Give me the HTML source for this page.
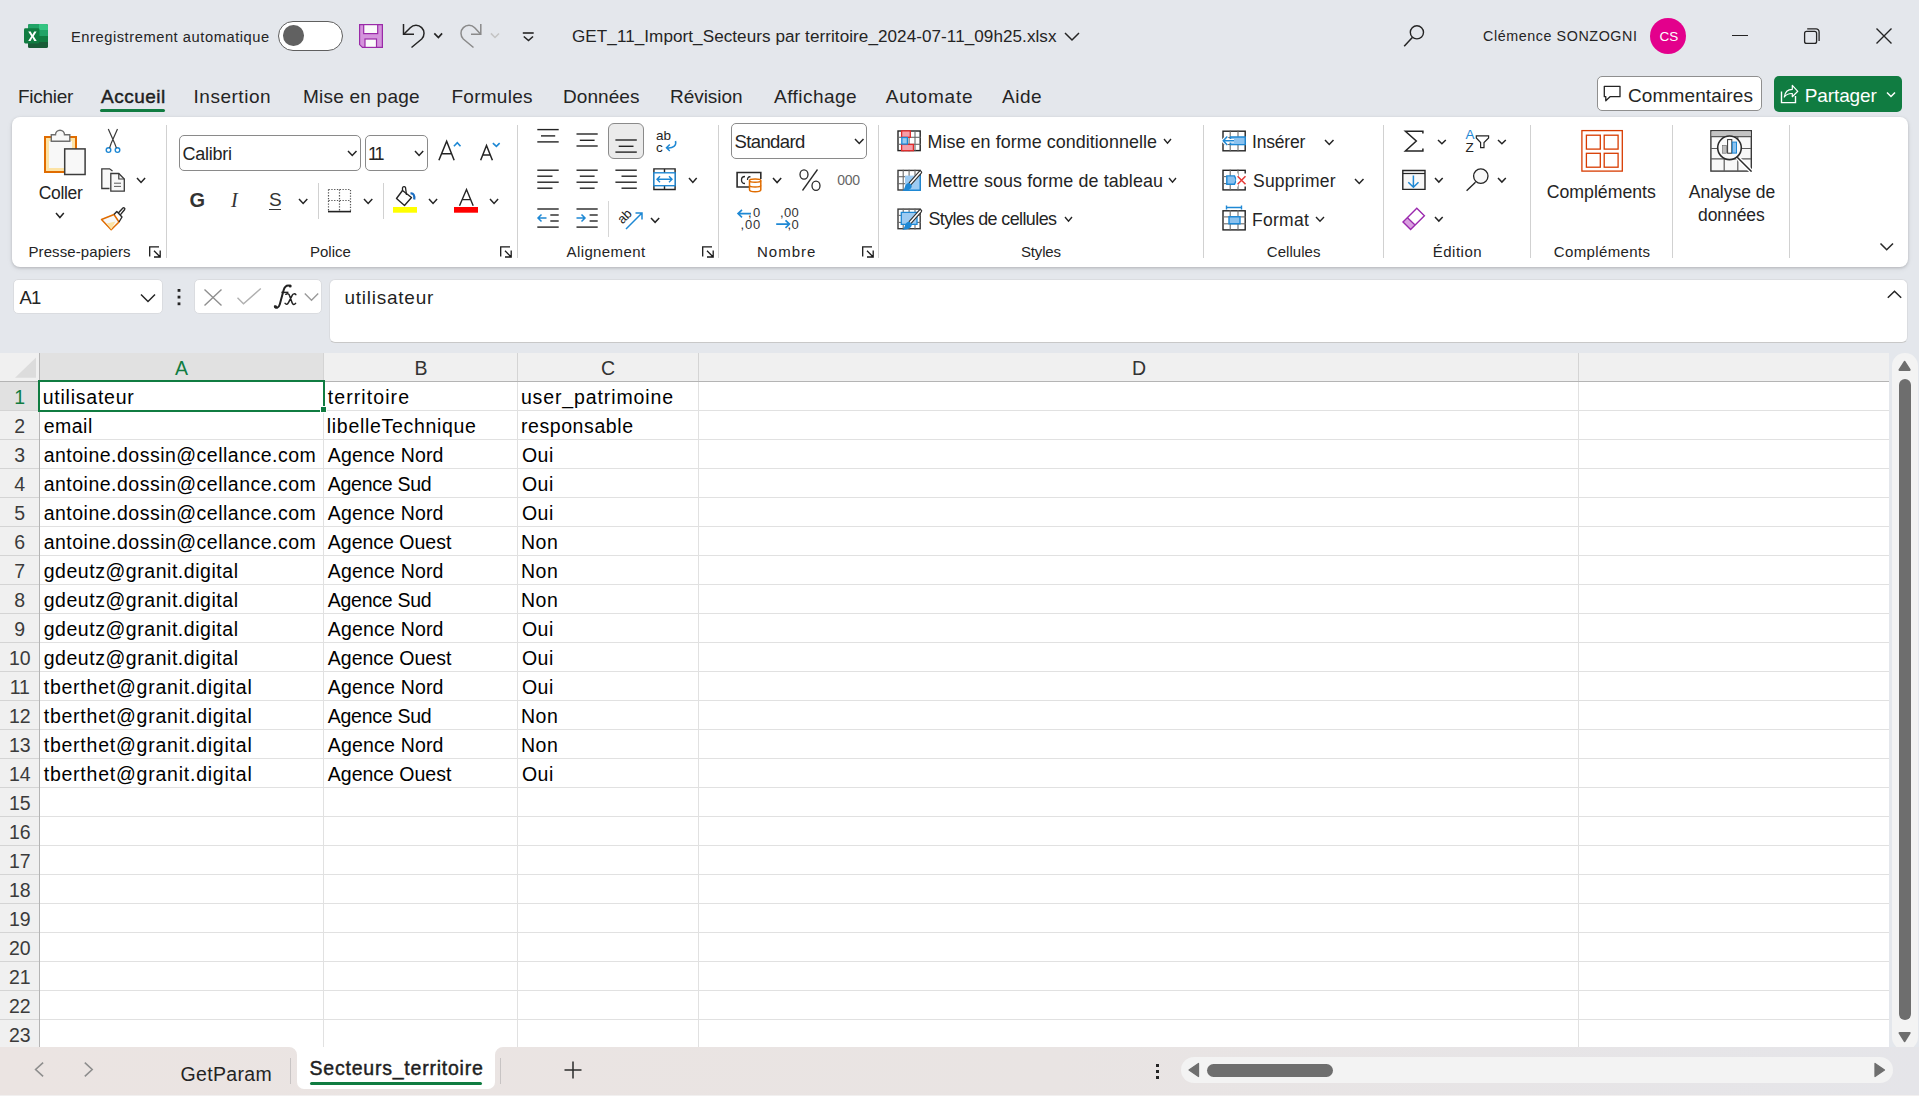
<!DOCTYPE html><html><head><meta charset="utf-8"><style>
html,body{margin:0;padding:0;}
body{width:1919px;height:1096px;overflow:hidden;position:relative;background:#E4E7EC;font-family:"Liberation Sans",sans-serif;}
.t{position:absolute;white-space:nowrap;}
svg{overflow:visible}
</style></head><body>
<svg style="position:absolute;left:23px;top:23px;" width="26" height="26" viewBox="0 0 26 26" fill="none">
<rect x="5" y="1" width="20" height="24" rx="1.6" fill="#185C37"/>
<path d="M5 7V2.6A1.6 1.6 0 0 1 6.6 1H16V7Z" fill="#21A366"/>
<path d="M16 1h7.4A1.6 1.6 0 0 1 25 2.6V7H16Z" fill="#33C481"/>
<rect x="5" y="7" width="20" height="6" fill="#21A366"/>
<rect x="5" y="13" width="20" height="6" fill="#107C41"/>
<rect x="1" y="5.2" width="15.4" height="15.2" rx="1.4" fill="#107C41"/>
<path d="M5.2 8.6h2.5l1.7 3.2 1.8-3.2h2.4l-2.9 4.6 3 4.7h-2.5l-1.8-3.3-1.8 3.3H5.2l3-4.7z" fill="#fff"/>
</svg>
<div class="t" style="left:71.00px;top:30.16px;font-size:14.7px;line-height:14.7px;color:#242424;font-weight:400;letter-spacing:0.546px;">Enregistrement automatique</div>
<div style="position:absolute;left:278px;top:21px;width:65px;height:30px;box-sizing:border-box;border:1px solid #5F5F5F;border-radius:15px;background:#fff;"></div>
<div style="position:absolute;left:283px;top:25px;width:20.6px;height:20.6px;border-radius:50%;background:#616161;"></div>
<svg style="position:absolute;left:359px;top:24px;" width="24" height="24" viewBox="0 0 24 24" fill="none">
<path d="M0.6 0.6H23.4V23.4H3.4L0.6 20.6Z" fill="#D494DC" stroke="#9A2AA8" stroke-width="1.2"/>
<rect x="4.7" y="0.6" width="14" height="9" fill="#fafafa" stroke="#9A2AA8" stroke-width="1.2"/>
<rect x="6" y="15" width="11.5" height="8.4" fill="#fafafa" stroke="#9A2AA8" stroke-width="1.2"/>
</svg>
<svg style="position:absolute;left:396px;top:18px;" width="50" height="36" viewBox="0 0 50 36" fill="none">
<path d="M7.5 6V16.2H18" stroke="#242424" stroke-width="1.5"/>
<path d="M8 16L14.3 9.7A8 8 0 0 1 25.7 21L15.5 29.5" stroke="#242424" stroke-width="1.5"/>
<path d="M38.3 15.4L42.4 19.5L46.1 15.4" stroke="#242424" stroke-width="1.7"/>
</svg>
<svg style="position:absolute;left:456px;top:18px;" width="50" height="36" viewBox="0 0 50 36" fill="none">
<path d="M24.8 6V16.2H15" stroke="#8A8A8A" stroke-width="1.5"/>
<path d="M24.5 16L18.7 9.7A8 8 0 0 0 7.3 21L17.5 29.5" stroke="#8A8A8A" stroke-width="1.5"/>
<path d="M34.9 15.4L39 19.5L43 15.4" stroke="#C4C4C4" stroke-width="1.5"/>
</svg>
<svg style="position:absolute;left:520px;top:28px;" width="16" height="16" viewBox="0 0 16 16" fill="none">
<path d="M2.8 5H13.7" stroke="#242424" stroke-width="1.6"/>
<path d="M3.8 8.5L8.5 12.5L13 8.5" stroke="#242424" stroke-width="1.6"/>
</svg>
<div class="t" style="left:572.00px;top:28.12px;font-size:17.1px;line-height:17.1px;color:#242424;font-weight:400;letter-spacing:0.059px;">GET_11_Import_Secteurs par territoire_2024-07-11_09h25.xlsx</div>
<svg style="position:absolute;left:1062px;top:28px;" width="20" height="16" viewBox="0 0 20 16" fill="none"><path d="M3 5L10 12L17 5" stroke="#242424" stroke-width="1.5"/></svg>
<svg style="position:absolute;left:1400px;top:20px;" width="30" height="30" viewBox="0 0 30 30" fill="none">
<circle cx="16.9" cy="12.3" r="6.6" stroke="#242424" stroke-width="1.4"/>
<path d="M12.3 17.4L4.2 26.2" stroke="#242424" stroke-width="1.5"/>
</svg>
<div class="t" style="left:1483.00px;top:29.40px;font-size:14.3px;line-height:14.3px;color:#242424;font-weight:400;letter-spacing:0.586px;">Clémence SONZOGNI</div>
<div style="position:absolute;left:1650px;top:18px;width:36px;height:36px;border-radius:50%;background:#E3008C;"></div>
<div class="t" style="left:1659.50px;top:29.97px;font-size:13.5px;line-height:13.5px;color:#fff;font-weight:400;">CS</div>
<div style="position:absolute;left:1732px;top:34.5px;width:16px;height:1.2px;background:#242424;"></div>
<svg style="position:absolute;left:1800px;top:24px;" width="24" height="24" viewBox="0 0 24 24" fill="none">
<rect x="4.6" y="7.4" width="12" height="12" rx="2" stroke="#242424" stroke-width="1.3"/>
<path d="M7.2 4.9H16A3 3 0 0 1 19.1 8V17" stroke="#242424" stroke-width="1.3"/>
</svg>
<svg style="position:absolute;left:1872px;top:24px;" width="24" height="24" viewBox="0 0 24 24" fill="none"><path d="M4.5 4.5L19.5 19.5M19.5 4.5L4.5 19.5" stroke="#242424" stroke-width="1.4"/></svg>
<div class="t" style="left:18.00px;top:86.92px;font-size:19px;line-height:19px;color:#242424;font-weight:400;letter-spacing:-0.280px;">Fichier</div>
<div class="t" style="left:193.50px;top:86.92px;font-size:19px;line-height:19px;color:#242424;font-weight:400;letter-spacing:0.524px;">Insertion</div>
<div class="t" style="left:303.00px;top:86.92px;font-size:19px;line-height:19px;color:#242424;font-weight:400;letter-spacing:0.227px;">Mise en page</div>
<div class="t" style="left:451.50px;top:86.92px;font-size:19px;line-height:19px;color:#242424;font-weight:400;letter-spacing:0.260px;">Formules</div>
<div class="t" style="left:563.00px;top:86.92px;font-size:19px;line-height:19px;color:#242424;font-weight:400;letter-spacing:0.074px;">Données</div>
<div class="t" style="left:670.00px;top:86.92px;font-size:19px;line-height:19px;color:#242424;font-weight:400;letter-spacing:-0.042px;">Révision</div>
<div class="t" style="left:774.00px;top:86.92px;font-size:19px;line-height:19px;color:#242424;font-weight:400;letter-spacing:0.461px;">Affichage</div>
<div class="t" style="left:885.70px;top:86.92px;font-size:19px;line-height:19px;color:#242424;font-weight:400;letter-spacing:0.792px;">Automate</div>
<div class="t" style="left:1002.00px;top:86.92px;font-size:19px;line-height:19px;color:#242424;font-weight:400;letter-spacing:0.513px;">Aide</div>
<div class="t" style="left:101.00px;top:86.92px;font-size:19px;line-height:19px;color:#1F1F1F;font-weight:400;letter-spacing:0.495px;-webkit-text-stroke:0.45px #1F1F1F;">Accueil</div>
<div style="position:absolute;left:100px;top:109px;width:65px;height:3px;background:#107C41;border-radius:2px;"></div>
<div style="position:absolute;left:1596.5px;top:76.3px;width:165px;height:35px;box-sizing:border-box;border:1px solid #8F8F8F;border-radius:5px;background:#fff;"></div>
<svg style="position:absolute;left:1600px;top:80px;" width="24" height="24" viewBox="0 0 24 24" fill="none"><path d="M4.3 6.3H20V16.7H10L5.8 20.8V16.7H4.3Z" stroke="#242424" stroke-width="1.3" stroke-linejoin="round"/></svg>
<div class="t" style="left:1628.00px;top:85.62px;font-size:19px;line-height:19px;color:#242424;font-weight:400;letter-spacing:0.133px;">Commentaires</div>
<div style="position:absolute;left:1774px;top:76.2px;width:128px;height:35.5px;border-radius:5px;background:#107C41;"></div>
<svg style="position:absolute;left:1778px;top:82px;" width="24" height="24" viewBox="0 0 24 24" fill="none">
<path d="M3.5 9.4V20.6H17.5V14" stroke="#fff" stroke-width="1.4"/>
<path d="M6.3 15C7 9.5 10.5 7.3 14.3 7.3V3.4L19.8 9.3L14.3 14.7V11.5C11 11.3 8.3 12.5 6.3 15Z" stroke="#fff" stroke-width="1.2" stroke-linejoin="round"/>
</svg>
<div class="t" style="left:1804.80px;top:85.62px;font-size:19px;line-height:19px;color:#fff;font-weight:400;letter-spacing:-0.121px;">Partager</div>
<svg style="position:absolute;left:1884px;top:88px;" width="14" height="12" viewBox="0 0 14 12" fill="none"><path d="M3 4.5L7 8.5L11 4.5" stroke="#fff" stroke-width="1.5"/></svg>
<div style="position:absolute;left:12px;top:117px;width:1896px;height:150px;background:#fff;border-radius:8px;box-shadow:0 1px 3px rgba(0,0,0,0.18),0 2px 6px rgba(0,0,0,0.06);"></div>
<div style="position:absolute;left:166px;top:125px;width:1px;height:133px;background:#D1D1D1;"></div>
<div style="position:absolute;left:517px;top:125px;width:1px;height:133px;background:#D1D1D1;"></div>
<div style="position:absolute;left:718px;top:125px;width:1px;height:133px;background:#D1D1D1;"></div>
<div style="position:absolute;left:878px;top:125px;width:1px;height:133px;background:#D1D1D1;"></div>
<div style="position:absolute;left:1203px;top:125px;width:1px;height:133px;background:#D1D1D1;"></div>
<div style="position:absolute;left:1383px;top:125px;width:1px;height:133px;background:#D1D1D1;"></div>
<div style="position:absolute;left:1530px;top:125px;width:1px;height:133px;background:#D1D1D1;"></div>
<div style="position:absolute;left:1672px;top:125px;width:1px;height:133px;background:#D1D1D1;"></div>
<div style="position:absolute;left:1789px;top:125px;width:1px;height:133px;background:#D1D1D1;"></div>
<div class="t" style="left:28.50px;top:244.05px;font-size:15px;line-height:15px;color:#242424;font-weight:400;letter-spacing:0.086px;">Presse-papiers</div>
<div class="t" style="left:310.00px;top:244.05px;font-size:15px;line-height:15px;color:#242424;font-weight:400;">Police</div>
<div class="t" style="left:566.50px;top:244.05px;font-size:15px;line-height:15px;color:#242424;font-weight:400;letter-spacing:0.403px;">Alignement</div>
<div class="t" style="left:757.00px;top:244.05px;font-size:15px;line-height:15px;color:#242424;font-weight:400;letter-spacing:0.999px;">Nombre</div>
<div class="t" style="left:1021.00px;top:244.05px;font-size:15px;line-height:15px;color:#242424;font-weight:400;letter-spacing:-0.169px;">Styles</div>
<div class="t" style="left:1266.75px;top:244.05px;font-size:15px;line-height:15px;color:#242424;font-weight:400;letter-spacing:0.056px;">Cellules</div>
<div class="t" style="left:1432.75px;top:244.05px;font-size:15px;line-height:15px;color:#242424;font-weight:400;letter-spacing:0.496px;">Édition</div>
<div class="t" style="left:1553.75px;top:244.05px;font-size:15px;line-height:15px;color:#242424;font-weight:400;letter-spacing:0.372px;">Compléments</div>
<svg style="position:absolute;left:148px;top:246px;" width="14" height="14" viewBox="0 0 14 14" fill="none"><path d="M1.7 10.4V0.9H11" stroke="#1A1A1A" stroke-width="1.3"/><path d="M6 4.8L12.2 11M12.2 4.5V11H6" stroke="#1A1A1A" stroke-width="1.3"/></svg>
<svg style="position:absolute;left:499px;top:246px;" width="14" height="14" viewBox="0 0 14 14" fill="none"><path d="M1.7 10.4V0.9H11" stroke="#1A1A1A" stroke-width="1.3"/><path d="M6 4.8L12.2 11M12.2 4.5V11H6" stroke="#1A1A1A" stroke-width="1.3"/></svg>
<svg style="position:absolute;left:700.5px;top:246px;" width="14" height="14" viewBox="0 0 14 14" fill="none"><path d="M1.7 10.4V0.9H11" stroke="#1A1A1A" stroke-width="1.3"/><path d="M6 4.8L12.2 11M12.2 4.5V11H6" stroke="#1A1A1A" stroke-width="1.3"/></svg>
<svg style="position:absolute;left:860.5px;top:246px;" width="14" height="14" viewBox="0 0 14 14" fill="none"><path d="M1.7 10.4V0.9H11" stroke="#1A1A1A" stroke-width="1.3"/><path d="M6 4.8L12.2 11M12.2 4.5V11H6" stroke="#1A1A1A" stroke-width="1.3"/></svg>
<svg style="position:absolute;left:40px;top:128px;" width="48" height="50" viewBox="0 0 48 50" fill="none">
<path d="M5 9H36V44H5Z" fill="#FCE3A6" stroke="#E06C00" stroke-width="2"/>
<path d="M9 13H32V40H9Z" fill="#F8F8F8"/>
<path d="M11.3 13.3V6.8H15.5A4.5 4.5 0 0 1 24.5 6.8H29.8V13.3Z" fill="#F8F8F8" stroke="#6E6E6E" stroke-width="1.4"/>
<rect x="24.7" y="20.9" width="20.4" height="25.6" fill="#F8F8F8" stroke="#3C3C3C" stroke-width="1.5"/>
</svg>
<div class="t" style="left:38.80px;top:184.99px;font-size:17.5px;line-height:17.5px;color:#242424;font-weight:400;letter-spacing:-0.336px;">Coller</div>
<svg style="position:absolute;left:55.3px;top:212.4px;" width="9.8" height="6.5" viewBox="0 0 9.8 6.5" fill="none"><path d="M1 1L4.9 5.5L8.8 1" stroke="#242424" stroke-width="1.5"/></svg>
<svg style="position:absolute;left:100px;top:126px;" width="26" height="30" viewBox="0 0 26 30" fill="none">
<path d="M8.3 3L14.5 17M17.5 3L11.3 17" stroke="#3A3A3A" stroke-width="1.2"/>
<circle cx="8.5" cy="24.1" r="2.3" stroke="#1E88D4" stroke-width="1.4"/>
<circle cx="17.5" cy="24.1" r="2.3" stroke="#1E88D4" stroke-width="1.4"/>
<path d="M11.3 17L9.6 21.9M14.5 17L16.4 21.9" stroke="#3A3A3A" stroke-width="1.2"/>
</svg>
<svg style="position:absolute;left:100px;top:166px;" width="28" height="28" viewBox="0 0 28 28" fill="none">
<path d="M9.5 22.5H1.8V2.8H9.6L12.5 5" stroke="#3A3A3A" stroke-width="1.3" fill="#F8F8F8"/>
<path d="M10.8 7.5H18.8L24.3 13V25.2H10.8Z" fill="#F8F8F8" stroke="#3A3A3A" stroke-width="1.3"/>
<path d="M18.8 7.5V13H24.3" stroke="#3A3A3A" stroke-width="1.2"/>
<path d="M14 17.2H21M14 20.4H21" stroke="#5A5A5A" stroke-width="1"/>
</svg>
<svg style="position:absolute;left:136.2px;top:177.2px;" width="10.1" height="6.5" viewBox="0 0 10.1 6.5" fill="none"><path d="M1 1L5.05 5.5L9.1 1" stroke="#242424" stroke-width="1.5"/></svg>
<svg style="position:absolute;left:100px;top:205px;" width="28" height="28" viewBox="0 0 28 28" fill="none">
<path d="M1.5 14.5L14 9.5L19 17L11.2 24.8Z" fill="#F8F8F8" stroke="#E06C00" stroke-width="1.5" stroke-linejoin="round"/>
<path d="M6.5 18.5L15.5 16.5L11.3 24.5Z" fill="#FCE3A6"/>
<path d="M14 9.5L16.8 6.5L22 12L19 17" stroke="#2B2B2B" stroke-width="1.4" stroke-linejoin="round"/>
<path d="M18.3 8L22.7 3.2A1.2 1.2 0 0 1 24.5 4.8L20.3 9.9" stroke="#2B2B2B" stroke-width="1.4" stroke-linejoin="round"/>
</svg>
<div style="position:absolute;left:179px;top:135px;width:181.5px;height:36px;box-sizing:border-box;border:1px solid #8A8A8A;border-radius:5px;background:#fff;"></div>
<div class="t" style="left:182.50px;top:144.76px;font-size:18px;line-height:18px;color:#242424;font-weight:400;letter-spacing:-0.252px;">Calibri</div>
<svg style="position:absolute;left:347px;top:150px;" width="10.5" height="6.5" viewBox="0 0 10.5 6.5" fill="none"><path d="M1 1L5.25 5.5L9.5 1" stroke="#242424" stroke-width="1.5"/></svg>
<div style="position:absolute;left:364.5px;top:135px;width:63px;height:36px;box-sizing:border-box;border:1px solid #8A8A8A;border-radius:5px;background:#fff;"></div>
<div class="t" style="left:368.00px;top:144.76px;font-size:18px;line-height:18px;color:#242424;font-weight:400;letter-spacing:-2.175px;">11</div>
<svg style="position:absolute;left:414px;top:150px;" width="10.2" height="6.5" viewBox="0 0 10.2 6.5" fill="none"><path d="M1 1L5.1 5.5L9.2 1" stroke="#242424" stroke-width="1.5"/></svg>
<svg style="position:absolute;left:430px;top:130px;" width="90" height="40" viewBox="0 0 90 40" fill="none">
<path d="M8.9 30.2L16.65 11.3L24.15 30.2M11.7 23.7H21.6" stroke="#242424" stroke-width="1.5"/>
<path d="M23.9 16.2L27.3 12.7L30.5 16.2" stroke="#1E88D4" stroke-width="1.6"/>
<path d="M50.65 30.2L56.5 15.5L62.4 30.2M52.9 24.9H60.2" stroke="#242424" stroke-width="1.5"/>
<path d="M62.85 13.1L66.4 16.4L69.65 13.1" stroke="#1E88D4" stroke-width="1.6"/>
</svg>
<div class="t" style="left:189.50px;top:189.57px;font-size:20px;line-height:20px;color:#333;font-weight:700;letter-spacing:-1.500px;">G</div>
<div class="t" style="left:231.00px;top:189.57px;font-size:20px;line-height:20px;color:#333;font-weight:400;font-family:'Liberation Serif',serif;font-style:italic;">I</div>
<div class="t" style="left:269.00px;top:189.92px;font-size:19px;line-height:19px;color:#333;font-weight:400;letter-spacing:-0.400px;">S</div>
<div style="position:absolute;left:269px;top:208.5px;width:12px;height:1.4px;background:#333;"></div>
<svg style="position:absolute;left:298px;top:198.3px;" width="10.3" height="6.4" viewBox="0 0 10.3 6.4" fill="none"><path d="M1 1L5.15 5.4L9.3 1" stroke="#242424" stroke-width="1.5"/></svg>
<div style="position:absolute;left:318px;top:183px;width:1px;height:36px;background:#D1D1D1;"></div>
<svg style="position:absolute;left:326px;top:187px;" width="28" height="28" viewBox="0 0 28 28" fill="none">
<path d="M2.5 2.5H24.5V24.5M2.5 2.5V24.5M13.5 2.5V24.5M2.5 13.5H24.5" stroke="#555" stroke-width="1.2" stroke-dasharray="1.3 1.5"/>
<path d="M2 24.6H25" stroke="#222" stroke-width="1.6"/>
</svg>
<svg style="position:absolute;left:363px;top:198.3px;" width="10.3" height="6.4" viewBox="0 0 10.3 6.4" fill="none"><path d="M1 1L5.15 5.4L9.3 1" stroke="#242424" stroke-width="1.5"/></svg>
<div style="position:absolute;left:383px;top:183px;width:1px;height:36px;background:#D1D1D1;"></div>
<svg style="position:absolute;left:390px;top:186px;" width="30" height="28" viewBox="0 0 30 28" fill="none">
<path d="M12.5 4.5L6.5 12.5L14.5 19.5L21.5 11.5Z" stroke="#242424" stroke-width="1.4" stroke-linejoin="round"/>
<path d="M12.5 4.5V1.8A1.6 1.6 0 0 1 15.5 1.5L16.5 9" stroke="#242424" stroke-width="1.3"/>
<path d="M20.5 7.5C23.5 7 24.8 9.5 24.2 13.5" stroke="#1B6EC2" stroke-width="2.2"/>
<rect x="3" y="21" width="24" height="5.7" fill="#FFFF00"/>
</svg>
<svg style="position:absolute;left:428px;top:198.3px;" width="10.1" height="6.4" viewBox="0 0 10.1 6.4" fill="none"><path d="M1 1L5.05 5.4L9.1 1" stroke="#242424" stroke-width="1.5"/></svg>
<svg style="position:absolute;left:450px;top:186px;" width="30" height="28" viewBox="0 0 30 28" fill="none">
<path d="M9.5 19.8L16.5 3.5L23.2 19.8M12.2 13.6H20.8" stroke="#242424" stroke-width="1.4"/>
<rect x="4" y="21" width="24" height="5.7" fill="#FF0000"/>
</svg>
<svg style="position:absolute;left:489px;top:198.3px;" width="10.1" height="6.4" viewBox="0 0 10.1 6.4" fill="none"><path d="M1 1L5.05 5.4L9.1 1" stroke="#242424" stroke-width="1.5"/></svg>
<div style="position:absolute;left:608.3px;top:123.3px;width:35.6px;height:35.6px;box-sizing:border-box;border:1px solid #8A8A8A;border-radius:6px;background:#EBEBEB;"></div>
<svg style="position:absolute;left:0px;top:0px;" width="1919" height="300" viewBox="0 0 1919 300" fill="none"><path d="M537.3 129.6H558.7" stroke="#242424" stroke-width="1.4"/><path d="M541 135.9H555.2" stroke="#242424" stroke-width="1.4"/><path d="M537.3 141.9H558.7" stroke="#242424" stroke-width="1.4"/><path d="M576.5 134H597.7" stroke="#242424" stroke-width="1.4"/><path d="M579.8 140.3H594.6" stroke="#242424" stroke-width="1.4"/><path d="M576.5 146H597.7" stroke="#242424" stroke-width="1.4"/><path d="M615.4 140H636.8" stroke="#242424" stroke-width="1.4"/><path d="M618.7 146.3H633.5" stroke="#242424" stroke-width="1.4"/><path d="M615.4 152.1H636.8" stroke="#242424" stroke-width="1.4"/><path d="M537.3 170.2H558.7" stroke="#242424" stroke-width="1.4"/><path d="M537.3 176.2H552.5" stroke="#242424" stroke-width="1.4"/><path d="M537.3 182.2H558.7" stroke="#242424" stroke-width="1.4"/><path d="M537.3 188.2H552.5" stroke="#242424" stroke-width="1.4"/><path d="M576.5 170.2H597.7" stroke="#242424" stroke-width="1.4"/><path d="M579.8 176.2H594.6" stroke="#242424" stroke-width="1.4"/><path d="M576.5 182.2H597.7" stroke="#242424" stroke-width="1.4"/><path d="M579.8 188.2H594.6" stroke="#242424" stroke-width="1.4"/><path d="M615.4 170.2H636.8" stroke="#242424" stroke-width="1.4"/><path d="M621.5 176.2H636.8" stroke="#242424" stroke-width="1.4"/><path d="M615.4 182.2H636.8" stroke="#242424" stroke-width="1.4"/><path d="M621.5 188.2H636.8" stroke="#242424" stroke-width="1.4"/><path d="M537.3 209H558.7" stroke="#242424" stroke-width="1.4"/><path d="M550.3 215H558.7" stroke="#242424" stroke-width="1.4"/><path d="M550.3 221H558.7" stroke="#242424" stroke-width="1.4"/><path d="M537.3 227.1H558.7" stroke="#242424" stroke-width="1.4"/><path d="M538 218H546.5M541.5 214.5L538 218L541.5 221.5" stroke="#1E88D4" stroke-width="1.5"/><path d="M576.5 209H597.7" stroke="#242424" stroke-width="1.4"/><path d="M589.6 215H597.7" stroke="#242424" stroke-width="1.4"/><path d="M589.6 221H597.7" stroke="#242424" stroke-width="1.4"/><path d="M576.5 227.1H597.7" stroke="#242424" stroke-width="1.4"/><path d="M576.5 218H585M581.5 214.5L585 218L581.5 221.5" stroke="#1E88D4" stroke-width="1.5"/></svg>
<svg style="position:absolute;left:650px;top:120px;" width="40" height="40" viewBox="0 0 40 40" fill="none"><text x="6" y="20.3" font-family="Liberation Sans" font-size="13.5" fill="#242424">ab</text><text x="6" y="31.8" font-family="Liberation Sans" font-size="13.5" fill="#242424">c</text></svg>
<svg style="position:absolute;left:650px;top:120px;" width="40" height="40" viewBox="0 0 40 40" fill="none"><path d="M25.5 21C26.8 25.5 23 28.5 17 27.8M19.8 24.5L16.5 27.8L19.8 31" stroke="#1E88D4" stroke-width="1.5"/></svg>
<svg style="position:absolute;left:650px;top:165px;" width="30" height="30" viewBox="0 0 30 30" fill="none">
<path d="M3.9 3.9H25.1V24.5H3.9Z" stroke="#242424" stroke-width="1.4"/>
<path d="M14.5 3.9V8M14.5 20.5V24.5" stroke="#242424" stroke-width="1.4"/>
<rect x="3.9" y="7.8" width="21.2" height="12.9" fill="#fff" stroke="#1E88D4" stroke-width="1.4"/>
<path d="M7 14.2H22M10 11.2L7 14.2L10 17.2M19 11.2L22 14.2L19 17.2" stroke="#1E88D4" stroke-width="1.4"/>
</svg>
<svg style="position:absolute;left:688.3px;top:177px;" width="9.7" height="6.4" viewBox="0 0 9.7 6.4" fill="none"><path d="M1 1L4.85 5.4L8.7 1" stroke="#242424" stroke-width="1.5"/></svg>
<svg style="position:absolute;left:612px;top:202px;" width="36" height="32" viewBox="0 0 36 32" fill="none">
<text x="0" y="0" transform="translate(10.5 22.5) rotate(-45)" font-family="Liberation Sans" font-size="13" fill="#242424">ab</text>
<path d="M14 27L30 11M23.5 11H30V17.5" stroke="#1E88D4" stroke-width="1.5"/>
</svg>
<svg style="position:absolute;left:650px;top:216.5px;" width="10.2" height="6.3" viewBox="0 0 10.2 6.3" fill="none"><path d="M1 1L5.1 5.3L9.2 1" stroke="#242424" stroke-width="1.5"/></svg>
<div style="position:absolute;left:608px;top:201px;width:1px;height:36px;background:#D6D6D6;"></div>
<div style="position:absolute;left:731px;top:123px;width:136px;height:36px;box-sizing:border-box;border:1px solid #8A8A8A;border-radius:5px;background:#fff;"></div>
<div class="t" style="left:734.50px;top:133.34px;font-size:18.5px;line-height:18.5px;color:#242424;font-weight:400;letter-spacing:-0.614px;">Standard</div>
<svg style="position:absolute;left:853.5px;top:138px;" width="10.5" height="6.5" viewBox="0 0 10.5 6.5" fill="none"><path d="M1 1L5.25 5.5L9.5 1" stroke="#242424" stroke-width="1.5"/></svg>
<svg style="position:absolute;left:733px;top:168px;" width="32" height="28" viewBox="0 0 32 28" fill="none">
<path d="M16.5 19H4.1V4.5H27.8V11" stroke="#2B2B2B" stroke-width="1.6"/>
<path d="M12 8.5C9 8.5 8.5 10 8.5 12S9 15.5 12 15.5M17.5 8.8C15 8.5 14.5 10 14.5 12" stroke="#2B2B2B" stroke-width="1.3"/>
<path d="M16.5 12.5C16.5 10.5 27.8 10.5 27.8 12.5V21.8C27.8 24.5 16.5 24.5 16.5 21.8Z" fill="#fff" stroke="#E06C00" stroke-width="1.5"/>
<path d="M16.5 12.8C16.5 14.8 27.8 14.8 27.8 12.8M16.5 17.5C16.5 19.5 27.8 19.5 27.8 17.5" stroke="#E06C00" stroke-width="1.4"/>
</svg>
<svg style="position:absolute;left:772.1px;top:177.1px;" width="10.2" height="6.6" viewBox="0 0 10.2 6.6" fill="none"><path d="M1 1L5.1 5.6L9.2 1" stroke="#242424" stroke-width="1.5"/></svg>
<svg style="position:absolute;left:795px;top:166px;" width="30" height="28" viewBox="0 0 30 28" fill="none"><ellipse cx="9" cy="8.5" rx="4" ry="4.6" stroke="#2B2B2B" stroke-width="1.3"/><ellipse cx="21" cy="19.8" rx="4" ry="4.6" stroke="#2B2B2B" stroke-width="1.3"/><path d="M22.5 3.5L7.5 24.5" stroke="#2B2B2B" stroke-width="1.3"/></svg>
<div class="t" style="left:837.20px;top:172.75px;font-size:14px;line-height:14px;color:#666;font-weight:400;letter-spacing:-0.286px;">000</div>
<svg style="position:absolute;left:733px;top:203px;" width="70" height="30" viewBox="0 0 70 30" fill="none">
<path d="M5 10.6H18M9 6.8L5 10.6L9 14.4" stroke="#1E88D4" stroke-width="1.6"/>
<path d="M43.2 21.1H56.5M52.5 17.3L56.5 21.1L52.5 24.9" stroke="#1E88D4" stroke-width="1.6"/>
</svg>
<div class="t" style="left:748.00px;top:206.00px;font-size:13px;line-height:13px;color:#333;font-weight:400;letter-spacing:1.388px;">,0</div>
<div class="t" style="left:740.50px;top:218.20px;font-size:13px;line-height:13px;color:#333;font-weight:400;letter-spacing:0.829px;">,00</div>
<div class="t" style="left:780.00px;top:206.00px;font-size:13px;line-height:13px;color:#333;font-weight:400;letter-spacing:0.329px;">,00</div>
<div class="t" style="left:787.50px;top:218.20px;font-size:13px;line-height:13px;color:#333;font-weight:400;letter-spacing:0.388px;">,0</div>
<svg style="position:absolute;left:0px;top:0px;" width="1919" height="300" viewBox="0 0 1919 300" fill="none"><rect x="898.0" y="131.0" width="22.200000000000003" height="19.6" stroke="#242424" stroke-width="1.4"/><path d="M903.2 130.3V151.3" stroke="#6A6A6A" stroke-width="1.1"/><path d="M909.1 130.3V151.3" stroke="#6A6A6A" stroke-width="1.1"/><path d="M915.0 130.3V151.3" stroke="#6A6A6A" stroke-width="1.1"/><path d="M897.3 137.3H920.9" stroke="#6A6A6A" stroke-width="1.1"/><path d="M897.3 144.3H920.9" stroke="#6A6A6A" stroke-width="1.1"/><rect x="901.6" y="130.9" width="8.7" height="6.4" fill="#F59EA8" stroke="#E22A2A" stroke-width="1.3"/><rect x="901.6" y="144.4" width="11.8" height="6.3" fill="#F59EA8" stroke="#E22A2A" stroke-width="1.3"/><rect x="901.8" y="137.5" width="5.6" height="6.6" fill="#9BCBF0" stroke="#1E88D4" stroke-width="1.3"/><rect x="898.0" y="170.39999999999998" width="22.200000000000003" height="19.6" stroke="#3A3A3A" stroke-width="1.4"/><path d="M903.2 169.7V190.7" stroke="#6A6A6A" stroke-width="1.1"/><path d="M909.1 169.7V190.7" stroke="#6A6A6A" stroke-width="1.1"/><path d="M915.0 169.7V190.7" stroke="#6A6A6A" stroke-width="1.1"/><path d="M897.3 176.7H920.9" stroke="#6A6A6A" stroke-width="1.1"/><path d="M897.3 183.7H920.9" stroke="#6A6A6A" stroke-width="1.1"/><path d="M905 175.6H920.2V190.2H905Z" fill="#9DCBF2"/><path d="M920.2 175.6V190.2H905" stroke="#1E88D4" stroke-width="1.4"/><path d="M920.3 172.3L910.3 183.6" stroke="#333" stroke-width="3.8" stroke-linecap="round"/><path d="M920.3 172.3L910.3 183.6" stroke="#fff" stroke-width="1.5" stroke-linecap="round"/><path d="M909 183C911.8 184 912.6 186.4 910.8 188.5C909 190.4 905.6 191.2 902.4 191C904.5 189.6 904.5 187.1 905.6 185.3C906.5 183.9 907.7 183 909 183Z" fill="#1E88D4"/><rect x="898.0" y="209.1" width="22.200000000000003" height="19.6" stroke="#3A3A3A" stroke-width="1.4"/><path d="M903.2 208.4V229.4" stroke="#6A6A6A" stroke-width="1.1"/><path d="M909.1 208.4V229.4" stroke="#6A6A6A" stroke-width="1.1"/><path d="M915.0 208.4V229.4" stroke="#6A6A6A" stroke-width="1.1"/><path d="M897.3 215.4H920.9" stroke="#6A6A6A" stroke-width="1.1"/><path d="M897.3 222.4H920.9" stroke="#6A6A6A" stroke-width="1.1"/><path d="M901.3 212.3H917V224.3H901.3Z" fill="#9DCBF2" stroke="#1E88D4" stroke-width="1.3"/><path d="M920.3 211L910.3 222.3" stroke="#333" stroke-width="3.8" stroke-linecap="round"/><path d="M920.3 211L910.3 222.3" stroke="#fff" stroke-width="1.5" stroke-linecap="round"/><path d="M909 221.7C911.8 222.7 912.6 225.1 910.8 227.2C909 229.1 905.6 229.9 902.4 229.7C904.5 228.3 904.5 225.8 905.6 224C906.5 222.6 907.7 221.7 909 221.7Z" fill="#1E88D4"/><rect x="1223.0" y="131.2" width="22.200000000000003" height="19.6" stroke="#242424" stroke-width="1.4"/><path d="M1230.2 130.5V151.5" stroke="#6A6A6A" stroke-width="1.1"/><path d="M1238.0 130.5V151.5" stroke="#6A6A6A" stroke-width="1.1"/><path d="M1222.3 137.5H1245.8999999999999" stroke="#6A6A6A" stroke-width="1.1"/><path d="M1222.3 144.5H1245.8999999999999" stroke="#6A6A6A" stroke-width="1.1"/><path d="M1230.5 137H1245.2V144.6H1230.5Z" fill="#8CC2EE" stroke="#1E88D4" stroke-width="1.4"/><path d="M1223 140.8H1234M1227.3 136.5L1223 140.8L1227.3 145.1" stroke="#fff" stroke-width="3.5"/><path d="M1223.3 140.8H1234M1227.3 136.5L1223.3 140.8L1227.3 145.1" stroke="#1E88D4" stroke-width="1.5"/><rect x="1223.0" y="170.29999999999998" width="22.200000000000003" height="19.6" stroke="#242424" stroke-width="1.4"/><path d="M1230.2 169.6V190.6" stroke="#6A6A6A" stroke-width="1.1"/><path d="M1238.0 169.6V190.6" stroke="#6A6A6A" stroke-width="1.1"/><path d="M1222.3 176.6H1245.8999999999999" stroke="#6A6A6A" stroke-width="1.1"/><path d="M1222.3 183.6H1245.8999999999999" stroke="#6A6A6A" stroke-width="1.1"/><path d="M1235.5 173.5V186.5M1245.9 173.5V186.5" stroke="#fff" stroke-width="5"/><path d="M1226.8 175.9H1234.5L1236.3 180L1234.5 184.2H1226.8Z" fill="#8CC2EE" stroke="#1E88D4" stroke-width="1.4"/><circle cx="1241.5" cy="180.2" r="5.5" fill="#fff"/><path d="M1237.6 176.2L1245.5 184.3M1245.5 176.2L1237.6 184.3" stroke="#E53935" stroke-width="1.5"/><rect x="1223.0" y="210.79999999999998" width="22.200000000000003" height="19.1" stroke="#242424" stroke-width="1.4"/><path d="M1230.2 210.1V230.6" stroke="#6A6A6A" stroke-width="1.1"/><path d="M1238.0 210.1V230.6" stroke="#6A6A6A" stroke-width="1.1"/><path d="M1222.3 216.9H1245.8999999999999" stroke="#6A6A6A" stroke-width="1.1"/><path d="M1222.3 223.8H1245.8999999999999" stroke="#6A6A6A" stroke-width="1.1"/><path d="M1226.5 207.5H1241.5M1226.5 205.5V209.5M1241.5 205.5V209.5" stroke="#1E88D4" stroke-width="1.4"/><path d="M1229 216.8H1240V223.7H1229Z" fill="#8CC2EE" stroke="#1E88D4" stroke-width="1.4"/></svg>
<div class="t" style="left:927.50px;top:133.85px;font-size:17.9px;line-height:17.9px;color:#242424;font-weight:400;letter-spacing:0.064px;">Mise en forme conditionnelle</div>
<svg style="position:absolute;left:1163px;top:138px;" width="9" height="6.2" viewBox="0 0 9 6.2" fill="none"><path d="M1 1L4.5 5.2L8 1" stroke="#242424" stroke-width="1.4"/></svg>
<div class="t" style="left:927.50px;top:172.60px;font-size:17.9px;line-height:17.9px;color:#242424;font-weight:400;letter-spacing:0.102px;">Mettre sous forme de tableau</div>
<svg style="position:absolute;left:1168px;top:177px;" width="9" height="6.2" viewBox="0 0 9 6.2" fill="none"><path d="M1 1L4.5 5.2L8 1" stroke="#242424" stroke-width="1.4"/></svg>
<div class="t" style="left:928.50px;top:211.35px;font-size:17.9px;line-height:17.9px;color:#242424;font-weight:400;letter-spacing:-0.575px;">Styles de cellules</div>
<svg style="position:absolute;left:1064px;top:215.5px;" width="9" height="6.2" viewBox="0 0 9 6.2" fill="none"><path d="M1 1L4.5 5.2L8 1" stroke="#242424" stroke-width="1.4"/></svg>
<div class="t" style="left:1252.00px;top:134.19px;font-size:17.5px;line-height:17.5px;color:#242424;font-weight:400;letter-spacing:-0.190px;">Insérer</div>
<svg style="position:absolute;left:1323.5px;top:138.5px;" width="10.5" height="6.5" viewBox="0 0 10.5 6.5" fill="none"><path d="M1 1L5.25 5.5L9.5 1" stroke="#242424" stroke-width="1.5"/></svg>
<div class="t" style="left:1253.00px;top:172.94px;font-size:17.5px;line-height:17.5px;color:#242424;font-weight:400;letter-spacing:0.232px;">Supprimer</div>
<svg style="position:absolute;left:1353.5px;top:177.5px;" width="10.5" height="6.5" viewBox="0 0 10.5 6.5" fill="none"><path d="M1 1L5.25 5.5L9.5 1" stroke="#242424" stroke-width="1.5"/></svg>
<div class="t" style="left:1252.00px;top:211.69px;font-size:17.5px;line-height:17.5px;color:#242424;font-weight:400;letter-spacing:0.288px;">Format</div>
<svg style="position:absolute;left:1315px;top:215.5px;" width="10" height="6.3" viewBox="0 0 10 6.3" fill="none"><path d="M1 1L5.0 5.3L9 1" stroke="#242424" stroke-width="1.4"/></svg>
<svg style="position:absolute;left:0px;top:0px;" width="1919" height="300" viewBox="0 0 1919 300" fill="none"><path d="M1422.9 133.4V131.2H1405.4L1416.3 141L1405.4 150.9H1422.9V148.6" stroke="#242424" stroke-width="1.5" stroke-linejoin="miter"/><path d="M1402.8 170.5H1425V189.4H1402.8Z" fill="#F8F8F8" stroke="#242424" stroke-width="1.4"/><path d="M1402.8 173.5H1425" stroke="#242424" stroke-width="1.2"/><path d="M1413.4 175.5V187M1408.3 182.3L1413.4 187.3L1418.5 182.3" stroke="#1E88D4" stroke-width="1.5"/><circle cx="1480.8" cy="176.1" r="7.2" fill="#F8F8F8" stroke="#242424" stroke-width="1.3"/><path d="M1475.5 182.3L1466.6 190.8" stroke="#242424" stroke-width="1.4"/><path d="M1402.8 222.3L1407.5 217.6L1414.8 224.7L1410.6 229.4Z" fill="#D9A0E0"/><path d="M1416.8 208.3L1424.4 215.8L1410.6 229.5L1403 222.1Z" stroke="#9B2AAE" stroke-width="1.4"/><path d="M1407.5 217.7L1414.8 224.8" stroke="#9B2AAE" stroke-width="1.3"/><path d="M1476.3 135.8H1488.6V138L1484 142.5V147.7H1480.6V142.5L1476.3 138Z" stroke="#242424" stroke-width="1.2"/><rect x="1581.9" y="130.6" width="40.4" height="40.5" stroke="#D83B01" stroke-width="1.3"/><rect x="1586.4" y="135.2" width="13.9" height="13.9" stroke="#D83B01" stroke-width="1.3"/><rect x="1586.4" y="153.3" width="13.9" height="13.9" stroke="#D83B01" stroke-width="1.3"/><rect x="1604.2" y="135.2" width="13.9" height="13.9" stroke="#D83B01" stroke-width="1.3"/><rect x="1604.2" y="153.3" width="13.9" height="13.9" stroke="#D83B01" stroke-width="1.3"/><rect x="1710.9" y="130.7" width="40.4" height="40.4" fill="#F8F8F8" stroke="#3A3A3A" stroke-width="1.4"/><rect x="1711.6" y="131.4" width="39" height="4.8" fill="#C4C4C4"/><path d="M1711 136.6H1751M1711 148.5H1751M1711 158.9H1751M1724.2 136.6V171M1737.8 136.6V171" stroke="#5A5A5A" stroke-width="1.2"/><path d="M1737 157L1751.5 171.5" stroke="#fff" stroke-width="4"/><path d="M1737.2 157.2L1751.5 171.5" stroke="#2B2B2B" stroke-width="1.5"/><circle cx="1729.5" cy="147.8" r="11.8" fill="#FAFAFA" stroke="#2B2B2B" stroke-width="1.6"/><rect x="1722.6" y="145.4" width="4" height="7.8" fill="#BDBDBD" stroke="#666" stroke-width="0.6"/><rect x="1727.6" y="139.6" width="4.2" height="13.6" fill="#fff" stroke="#333" stroke-width="1"/><rect x="1732.3" y="142.1" width="4.2" height="11" fill="#8CC2EE" stroke="#1E88D4" stroke-width="1"/><path d="M1880.5 243.5L1886.7 249.7L1893 243.5" stroke="#2B2B2B" stroke-width="1.6"/></svg>
<div class="t" style="left:1465.50px;top:127.87px;font-size:13.5px;line-height:13.5px;color:#1E88D4;font-weight:400;">A</div>
<div class="t" style="left:1465.50px;top:140.97px;font-size:13.5px;line-height:13.5px;color:#242424;font-weight:400;">Z</div>
<svg style="position:absolute;left:1437.2px;top:138.7px;" width="9.8" height="5.8" viewBox="0 0 9.8 5.8" fill="none"><path d="M1 1L4.9 4.8L8.8 1" stroke="#242424" stroke-width="1.5"/></svg>
<svg style="position:absolute;left:1497.2px;top:138.7px;" width="9.8" height="5.8" viewBox="0 0 9.8 5.8" fill="none"><path d="M1 1L4.9 4.8L8.8 1" stroke="#242424" stroke-width="1.5"/></svg>
<svg style="position:absolute;left:1434.3px;top:177.2px;" width="9.7" height="6.1" viewBox="0 0 9.7 6.1" fill="none"><path d="M1 1L4.85 5.1L8.7 1" stroke="#242424" stroke-width="1.5"/></svg>
<svg style="position:absolute;left:1497.2px;top:177.2px;" width="9.8" height="6.1" viewBox="0 0 9.8 6.1" fill="none"><path d="M1 1L4.9 5.1L8.8 1" stroke="#242424" stroke-width="1.5"/></svg>
<svg style="position:absolute;left:1434.3px;top:216.1px;" width="9.7" height="6.1" viewBox="0 0 9.7 6.1" fill="none"><path d="M1 1L4.85 5.1L8.7 1" stroke="#242424" stroke-width="1.5"/></svg>
<div class="t" style="left:1546.75px;top:183.52px;font-size:17.7px;line-height:17.7px;color:#242424;font-weight:400;">Compléments</div>
<div class="t" style="left:1688.75px;top:183.69px;font-size:17.5px;line-height:17.5px;color:#242424;font-weight:400;letter-spacing:-0.011px;">Analyse de</div>
<div class="t" style="left:1698.00px;top:206.94px;font-size:17.5px;line-height:17.5px;color:#242424;font-weight:400;letter-spacing:-0.066px;">données</div>
<div style="position:absolute;left:12.5px;top:279px;width:150.5px;height:34.5px;box-sizing:border-box;border:1px solid #DADCE0;border-radius:5px;background:#fff;"></div>
<div class="t" style="left:19.50px;top:289.34px;font-size:18.5px;line-height:18.5px;color:#242424;font-weight:400;letter-spacing:-0.839px;">A1</div>
<svg style="position:absolute;left:136px;top:288px;" width="24" height="20" viewBox="0 0 24 20" fill="none"><path d="M5 6.5L12 13.5L19 6.5" stroke="#242424" stroke-width="1.5"/></svg>
<svg style="position:absolute;left:172px;top:286px;" width="14" height="22" viewBox="0 0 14 22" fill="none"><rect x="5.6" y="3" width="2.8" height="2.8" fill="#242424"/><rect x="5.6" y="9.7" width="2.8" height="2.8" fill="#242424"/><rect x="5.6" y="16.4" width="2.8" height="2.8" fill="#242424"/></svg>
<div style="position:absolute;left:194px;top:279px;width:128px;height:34.5px;box-sizing:border-box;border:1px solid #DADCE0;border-radius:5px;background:#fff;"></div>
<svg style="position:absolute;left:195px;top:280px;" width="127" height="34" viewBox="0 0 127 34" fill="none">
<path d="M9.5 9.5L26.5 25.5M26.5 9.5L9.5 25.5" stroke="#8F8F8F" stroke-width="1.4"/>
<path d="M42.5 17.8L48.5 23.8L65.8 8.5" stroke="#B0B0B0" stroke-width="1.4"/>
<path d="M109.8 13.6L116.5 20.2L123.2 13.6" stroke="#9A9A9A" stroke-width="1.4"/>
</svg>
<svg style="position:absolute;left:0px;top:250px;" width="400" height="80" viewBox="0 0 400 80" fill="none">
<path d="M274.8 306.3C275.8 308.6 278.6 308.6 279.8 304.3L283.6 290.2C284.6 286.6 286.6 284.8 289.8 285.6" stroke="#222" stroke-width="2" stroke-linecap="round" transform="translate(0 -250)"/>
<circle cx="275.6" cy="56.8" r="1.6" fill="#222"/><circle cx="290.2" cy="35.9" r="1.5" fill="#222"/>
<path d="M281.4 292.4H288.4" stroke="#222" stroke-width="1.5" transform="translate(0 -250)"/>
<path d="M285.8 294.3C287.6 293.2 289 293.8 289.6 295.8L292.1 302.8C292.8 304.8 294.3 305 295.6 303.4M295.8 294.6C294.8 293.4 293.2 293.6 292.2 295.4L288.6 302.4C287.6 304.4 286.2 304.8 285.1 303.4" stroke="#222" stroke-width="1.5" stroke-linecap="round" transform="translate(0 -250)"/>
</svg>
<div style="position:absolute;left:329px;top:279px;width:1578.5px;height:64px;box-sizing:border-box;border:1px solid #DADCE0;border-bottom-color:#C8C8C8;border-radius:6px;background:#fff;"></div>
<div class="t" style="left:344.50px;top:287.92px;font-size:19px;line-height:19px;color:#1F1F1F;font-weight:400;letter-spacing:0.751px;">utilisateur</div>
<svg style="position:absolute;left:1884px;top:284px;" width="22" height="20" viewBox="0 0 22 20" fill="none"><path d="M3.8 13.8L10.5 7.2L17.2 13.8" stroke="#242424" stroke-width="1.5"/></svg>
<div style="position:absolute;left:0px;top:353px;width:1889px;height:694px;background:#fff;"></div>
<div style="position:absolute;left:0px;top:353px;width:1889px;height:28px;background:#F0F0F0;"></div>
<div style="position:absolute;left:0px;top:353px;width:39px;height:694px;background:#F0F0F0;"></div>
<div style="position:absolute;left:40px;top:353px;width:283px;height:28px;background:#E1E1E1;"></div>
<div style="position:absolute;left:0px;top:382px;width:39px;height:28px;background:#E1E1E1;"></div>
<svg style="position:absolute;left:0px;top:353px;" width="39" height="28" viewBox="0 0 39 28" fill="none"><path d="M15 24.7H36V4.5Z" fill="#DCDCDC"/></svg>
<div style="position:absolute;left:0px;top:381px;width:1889px;height:1px;background:#B4B4B4;"></div>
<div style="position:absolute;left:39px;top:353px;width:1px;height:694px;background:#B4B4B4;"></div>
<div style="position:absolute;left:323px;top:353px;width:1px;height:28px;background:#D4D4D4;"></div>
<div style="position:absolute;left:323px;top:382px;width:1px;height:665px;background:#E1E1E1;"></div>
<div style="position:absolute;left:517px;top:353px;width:1px;height:28px;background:#D4D4D4;"></div>
<div style="position:absolute;left:517px;top:382px;width:1px;height:665px;background:#E1E1E1;"></div>
<div style="position:absolute;left:698px;top:353px;width:1px;height:28px;background:#D4D4D4;"></div>
<div style="position:absolute;left:698px;top:382px;width:1px;height:665px;background:#E1E1E1;"></div>
<div style="position:absolute;left:1578px;top:353px;width:1px;height:28px;background:#D4D4D4;"></div>
<div style="position:absolute;left:1578px;top:382px;width:1px;height:665px;background:#E1E1E1;"></div>
<div style="position:absolute;left:40px;top:410px;width:1849px;height:1px;background:#E1E1E1;"></div>
<div style="position:absolute;left:0px;top:410px;width:39px;height:1px;background:#D4D4D4;"></div>
<div style="position:absolute;left:40px;top:439px;width:1849px;height:1px;background:#E1E1E1;"></div>
<div style="position:absolute;left:0px;top:439px;width:39px;height:1px;background:#D4D4D4;"></div>
<div style="position:absolute;left:40px;top:468px;width:1849px;height:1px;background:#E1E1E1;"></div>
<div style="position:absolute;left:0px;top:468px;width:39px;height:1px;background:#D4D4D4;"></div>
<div style="position:absolute;left:40px;top:497px;width:1849px;height:1px;background:#E1E1E1;"></div>
<div style="position:absolute;left:0px;top:497px;width:39px;height:1px;background:#D4D4D4;"></div>
<div style="position:absolute;left:40px;top:526px;width:1849px;height:1px;background:#E1E1E1;"></div>
<div style="position:absolute;left:0px;top:526px;width:39px;height:1px;background:#D4D4D4;"></div>
<div style="position:absolute;left:40px;top:555px;width:1849px;height:1px;background:#E1E1E1;"></div>
<div style="position:absolute;left:0px;top:555px;width:39px;height:1px;background:#D4D4D4;"></div>
<div style="position:absolute;left:40px;top:584px;width:1849px;height:1px;background:#E1E1E1;"></div>
<div style="position:absolute;left:0px;top:584px;width:39px;height:1px;background:#D4D4D4;"></div>
<div style="position:absolute;left:40px;top:613px;width:1849px;height:1px;background:#E1E1E1;"></div>
<div style="position:absolute;left:0px;top:613px;width:39px;height:1px;background:#D4D4D4;"></div>
<div style="position:absolute;left:40px;top:642px;width:1849px;height:1px;background:#E1E1E1;"></div>
<div style="position:absolute;left:0px;top:642px;width:39px;height:1px;background:#D4D4D4;"></div>
<div style="position:absolute;left:40px;top:671px;width:1849px;height:1px;background:#E1E1E1;"></div>
<div style="position:absolute;left:0px;top:671px;width:39px;height:1px;background:#D4D4D4;"></div>
<div style="position:absolute;left:40px;top:700px;width:1849px;height:1px;background:#E1E1E1;"></div>
<div style="position:absolute;left:0px;top:700px;width:39px;height:1px;background:#D4D4D4;"></div>
<div style="position:absolute;left:40px;top:729px;width:1849px;height:1px;background:#E1E1E1;"></div>
<div style="position:absolute;left:0px;top:729px;width:39px;height:1px;background:#D4D4D4;"></div>
<div style="position:absolute;left:40px;top:758px;width:1849px;height:1px;background:#E1E1E1;"></div>
<div style="position:absolute;left:0px;top:758px;width:39px;height:1px;background:#D4D4D4;"></div>
<div style="position:absolute;left:40px;top:787px;width:1849px;height:1px;background:#E1E1E1;"></div>
<div style="position:absolute;left:0px;top:787px;width:39px;height:1px;background:#D4D4D4;"></div>
<div style="position:absolute;left:40px;top:816px;width:1849px;height:1px;background:#E1E1E1;"></div>
<div style="position:absolute;left:0px;top:816px;width:39px;height:1px;background:#D4D4D4;"></div>
<div style="position:absolute;left:40px;top:845px;width:1849px;height:1px;background:#E1E1E1;"></div>
<div style="position:absolute;left:0px;top:845px;width:39px;height:1px;background:#D4D4D4;"></div>
<div style="position:absolute;left:40px;top:874px;width:1849px;height:1px;background:#E1E1E1;"></div>
<div style="position:absolute;left:0px;top:874px;width:39px;height:1px;background:#D4D4D4;"></div>
<div style="position:absolute;left:40px;top:903px;width:1849px;height:1px;background:#E1E1E1;"></div>
<div style="position:absolute;left:0px;top:903px;width:39px;height:1px;background:#D4D4D4;"></div>
<div style="position:absolute;left:40px;top:932px;width:1849px;height:1px;background:#E1E1E1;"></div>
<div style="position:absolute;left:0px;top:932px;width:39px;height:1px;background:#D4D4D4;"></div>
<div style="position:absolute;left:40px;top:961px;width:1849px;height:1px;background:#E1E1E1;"></div>
<div style="position:absolute;left:0px;top:961px;width:39px;height:1px;background:#D4D4D4;"></div>
<div style="position:absolute;left:40px;top:990px;width:1849px;height:1px;background:#E1E1E1;"></div>
<div style="position:absolute;left:0px;top:990px;width:39px;height:1px;background:#D4D4D4;"></div>
<div style="position:absolute;left:40px;top:1019px;width:1849px;height:1px;background:#E1E1E1;"></div>
<div style="position:absolute;left:0px;top:1019px;width:39px;height:1px;background:#D4D4D4;"></div>
<div class="t" style="left:141.5px;width:80px;text-align:center;top:359.49px;font-size:19.5px;line-height:19.5px;color:#107C41">A</div>
<div class="t" style="left:381px;width:80px;text-align:center;top:359.49px;font-size:19.5px;line-height:19.5px;color:#333">B</div>
<div class="t" style="left:568px;width:80px;text-align:center;top:359.49px;font-size:19.5px;line-height:19.5px;color:#333">C</div>
<div class="t" style="left:1099px;width:80px;text-align:center;top:359.49px;font-size:19.5px;line-height:19.5px;color:#333">D</div>
<div class="t" style="left:0px;width:39.5px;text-align:center;top:388.49px;font-size:19.5px;line-height:19.5px;color:#107C41">1</div>
<div class="t" style="left:0px;width:39.5px;text-align:center;top:417.49px;font-size:19.5px;line-height:19.5px;color:#3B3B3B">2</div>
<div class="t" style="left:0px;width:39.5px;text-align:center;top:446.49px;font-size:19.5px;line-height:19.5px;color:#3B3B3B">3</div>
<div class="t" style="left:0px;width:39.5px;text-align:center;top:475.49px;font-size:19.5px;line-height:19.5px;color:#3B3B3B">4</div>
<div class="t" style="left:0px;width:39.5px;text-align:center;top:504.49px;font-size:19.5px;line-height:19.5px;color:#3B3B3B">5</div>
<div class="t" style="left:0px;width:39.5px;text-align:center;top:533.49px;font-size:19.5px;line-height:19.5px;color:#3B3B3B">6</div>
<div class="t" style="left:0px;width:39.5px;text-align:center;top:562.49px;font-size:19.5px;line-height:19.5px;color:#3B3B3B">7</div>
<div class="t" style="left:0px;width:39.5px;text-align:center;top:591.49px;font-size:19.5px;line-height:19.5px;color:#3B3B3B">8</div>
<div class="t" style="left:0px;width:39.5px;text-align:center;top:620.49px;font-size:19.5px;line-height:19.5px;color:#3B3B3B">9</div>
<div class="t" style="left:0px;width:39.5px;text-align:center;top:649.49px;font-size:19.5px;line-height:19.5px;color:#3B3B3B">10</div>
<div class="t" style="left:0px;width:39.5px;text-align:center;top:678.49px;font-size:19.5px;line-height:19.5px;color:#3B3B3B">11</div>
<div class="t" style="left:0px;width:39.5px;text-align:center;top:707.49px;font-size:19.5px;line-height:19.5px;color:#3B3B3B">12</div>
<div class="t" style="left:0px;width:39.5px;text-align:center;top:736.49px;font-size:19.5px;line-height:19.5px;color:#3B3B3B">13</div>
<div class="t" style="left:0px;width:39.5px;text-align:center;top:765.49px;font-size:19.5px;line-height:19.5px;color:#3B3B3B">14</div>
<div class="t" style="left:0px;width:39.5px;text-align:center;top:794.49px;font-size:19.5px;line-height:19.5px;color:#3B3B3B">15</div>
<div class="t" style="left:0px;width:39.5px;text-align:center;top:823.49px;font-size:19.5px;line-height:19.5px;color:#3B3B3B">16</div>
<div class="t" style="left:0px;width:39.5px;text-align:center;top:852.49px;font-size:19.5px;line-height:19.5px;color:#3B3B3B">17</div>
<div class="t" style="left:0px;width:39.5px;text-align:center;top:881.49px;font-size:19.5px;line-height:19.5px;color:#3B3B3B">18</div>
<div class="t" style="left:0px;width:39.5px;text-align:center;top:910.49px;font-size:19.5px;line-height:19.5px;color:#3B3B3B">19</div>
<div class="t" style="left:0px;width:39.5px;text-align:center;top:939.49px;font-size:19.5px;line-height:19.5px;color:#3B3B3B">20</div>
<div class="t" style="left:0px;width:39.5px;text-align:center;top:968.49px;font-size:19.5px;line-height:19.5px;color:#3B3B3B">21</div>
<div class="t" style="left:0px;width:39.5px;text-align:center;top:997.49px;font-size:19.5px;line-height:19.5px;color:#3B3B3B">22</div>
<div class="t" style="left:0px;width:39.5px;text-align:center;top:1026.49px;font-size:19.5px;line-height:19.5px;color:#3B3B3B">23</div>
<div class="t" style="left:42.70px;top:388.49px;font-size:19.5px;line-height:19.5px;color:#000;font-weight:400;letter-spacing:0.764px;">utilisateur</div>
<div class="t" style="left:327.80px;top:388.49px;font-size:19.5px;line-height:19.5px;color:#000;font-weight:400;letter-spacing:1.081px;">territoire</div>
<div class="t" style="left:520.90px;top:388.49px;font-size:19.5px;line-height:19.5px;color:#000;font-weight:400;letter-spacing:0.887px;">user_patrimoine</div>
<div class="t" style="left:43.70px;top:417.49px;font-size:19.5px;line-height:19.5px;color:#000;font-weight:400;letter-spacing:0.484px;">email</div>
<div class="t" style="left:326.80px;top:417.49px;font-size:19.5px;line-height:19.5px;color:#000;font-weight:400;letter-spacing:0.692px;">libelleTechnique</div>
<div class="t" style="left:520.90px;top:417.49px;font-size:19.5px;line-height:19.5px;color:#000;font-weight:400;letter-spacing:0.590px;">responsable</div>
<div class="t" style="left:43.70px;top:446.49px;font-size:19.5px;line-height:19.5px;color:#000;font-weight:400;letter-spacing:0.492px;">antoine.dossin@cellance.com</div>
<div class="t" style="left:327.80px;top:446.49px;font-size:19.5px;line-height:19.5px;color:#000;font-weight:400;letter-spacing:0.183px;">Agence Nord</div>
<div class="t" style="left:521.90px;top:446.49px;font-size:19.5px;line-height:19.5px;color:#000;font-weight:400;letter-spacing:0.494px;">Oui</div>
<div class="t" style="left:43.70px;top:475.49px;font-size:19.5px;line-height:19.5px;color:#000;font-weight:400;letter-spacing:0.492px;">antoine.dossin@cellance.com</div>
<div class="t" style="left:327.80px;top:475.49px;font-size:19.5px;line-height:19.5px;color:#000;font-weight:400;letter-spacing:-0.278px;">Agence Sud</div>
<div class="t" style="left:521.90px;top:475.49px;font-size:19.5px;line-height:19.5px;color:#000;font-weight:400;letter-spacing:0.494px;">Oui</div>
<div class="t" style="left:43.70px;top:504.49px;font-size:19.5px;line-height:19.5px;color:#000;font-weight:400;letter-spacing:0.492px;">antoine.dossin@cellance.com</div>
<div class="t" style="left:327.80px;top:504.49px;font-size:19.5px;line-height:19.5px;color:#000;font-weight:400;letter-spacing:0.183px;">Agence Nord</div>
<div class="t" style="left:521.90px;top:504.49px;font-size:19.5px;line-height:19.5px;color:#000;font-weight:400;letter-spacing:0.494px;">Oui</div>
<div class="t" style="left:43.70px;top:533.49px;font-size:19.5px;line-height:19.5px;color:#000;font-weight:400;letter-spacing:0.492px;">antoine.dossin@cellance.com</div>
<div class="t" style="left:327.80px;top:533.49px;font-size:19.5px;line-height:19.5px;color:#000;font-weight:400;">Agence Ouest</div>
<div class="t" style="left:520.90px;top:533.49px;font-size:19.5px;line-height:19.5px;color:#000;font-weight:400;letter-spacing:0.636px;">Non</div>
<div class="t" style="left:43.70px;top:562.49px;font-size:19.5px;line-height:19.5px;color:#000;font-weight:400;letter-spacing:0.542px;">gdeutz@granit.digital</div>
<div class="t" style="left:327.80px;top:562.49px;font-size:19.5px;line-height:19.5px;color:#000;font-weight:400;letter-spacing:0.183px;">Agence Nord</div>
<div class="t" style="left:520.90px;top:562.49px;font-size:19.5px;line-height:19.5px;color:#000;font-weight:400;letter-spacing:0.636px;">Non</div>
<div class="t" style="left:43.70px;top:591.49px;font-size:19.5px;line-height:19.5px;color:#000;font-weight:400;letter-spacing:0.542px;">gdeutz@granit.digital</div>
<div class="t" style="left:327.80px;top:591.49px;font-size:19.5px;line-height:19.5px;color:#000;font-weight:400;letter-spacing:-0.278px;">Agence Sud</div>
<div class="t" style="left:520.90px;top:591.49px;font-size:19.5px;line-height:19.5px;color:#000;font-weight:400;letter-spacing:0.636px;">Non</div>
<div class="t" style="left:43.70px;top:620.49px;font-size:19.5px;line-height:19.5px;color:#000;font-weight:400;letter-spacing:0.542px;">gdeutz@granit.digital</div>
<div class="t" style="left:327.80px;top:620.49px;font-size:19.5px;line-height:19.5px;color:#000;font-weight:400;letter-spacing:0.183px;">Agence Nord</div>
<div class="t" style="left:521.90px;top:620.49px;font-size:19.5px;line-height:19.5px;color:#000;font-weight:400;letter-spacing:0.494px;">Oui</div>
<div class="t" style="left:43.70px;top:649.49px;font-size:19.5px;line-height:19.5px;color:#000;font-weight:400;letter-spacing:0.542px;">gdeutz@granit.digital</div>
<div class="t" style="left:327.80px;top:649.49px;font-size:19.5px;line-height:19.5px;color:#000;font-weight:400;">Agence Ouest</div>
<div class="t" style="left:521.90px;top:649.49px;font-size:19.5px;line-height:19.5px;color:#000;font-weight:400;letter-spacing:0.494px;">Oui</div>
<div class="t" style="left:43.70px;top:678.49px;font-size:19.5px;line-height:19.5px;color:#000;font-weight:400;letter-spacing:0.771px;">tberthet@granit.digital</div>
<div class="t" style="left:327.80px;top:678.49px;font-size:19.5px;line-height:19.5px;color:#000;font-weight:400;letter-spacing:0.183px;">Agence Nord</div>
<div class="t" style="left:521.90px;top:678.49px;font-size:19.5px;line-height:19.5px;color:#000;font-weight:400;letter-spacing:0.494px;">Oui</div>
<div class="t" style="left:43.70px;top:707.49px;font-size:19.5px;line-height:19.5px;color:#000;font-weight:400;letter-spacing:0.771px;">tberthet@granit.digital</div>
<div class="t" style="left:327.80px;top:707.49px;font-size:19.5px;line-height:19.5px;color:#000;font-weight:400;letter-spacing:-0.278px;">Agence Sud</div>
<div class="t" style="left:520.90px;top:707.49px;font-size:19.5px;line-height:19.5px;color:#000;font-weight:400;letter-spacing:0.636px;">Non</div>
<div class="t" style="left:43.70px;top:736.49px;font-size:19.5px;line-height:19.5px;color:#000;font-weight:400;letter-spacing:0.771px;">tberthet@granit.digital</div>
<div class="t" style="left:327.80px;top:736.49px;font-size:19.5px;line-height:19.5px;color:#000;font-weight:400;letter-spacing:0.183px;">Agence Nord</div>
<div class="t" style="left:520.90px;top:736.49px;font-size:19.5px;line-height:19.5px;color:#000;font-weight:400;letter-spacing:0.636px;">Non</div>
<div class="t" style="left:43.70px;top:765.49px;font-size:19.5px;line-height:19.5px;color:#000;font-weight:400;letter-spacing:0.771px;">tberthet@granit.digital</div>
<div class="t" style="left:327.80px;top:765.49px;font-size:19.5px;line-height:19.5px;color:#000;font-weight:400;">Agence Ouest</div>
<div class="t" style="left:521.90px;top:765.49px;font-size:19.5px;line-height:19.5px;color:#000;font-weight:400;letter-spacing:0.494px;">Oui</div>
<div style="position:absolute;left:38px;top:380px;width:287px;height:32px;box-sizing:border-box;border:2px solid #107C41;"></div>
<div style="position:absolute;left:319.5px;top:406px;width:7px;height:7px;background:#107C41;border:1px solid #fff;box-sizing:border-box;"></div>
<div style="position:absolute;left:1892px;top:353px;width:25.5px;height:696.5px;background:#F3F3F3;border-radius:12.75px;"></div>
<svg style="position:absolute;left:1892px;top:353px;" width="25" height="697" viewBox="0 0 25 697" fill="none">
<path d="M7.6 16.9L12.6 9L17.6 16.9Z" fill="#6E6E6E" stroke="#6E6E6E" stroke-width="2.2" stroke-linejoin="round"/>
<path d="M7.6 680L12.6 688L17.6 680Z" fill="#6E6E6E" stroke="#6E6E6E" stroke-width="2.2" stroke-linejoin="round"/>
</svg>
<div style="position:absolute;left:1899px;top:378.5px;width:12px;height:641.5px;background:#6E6E6E;border-radius:6px;"></div>
<div style="position:absolute;left:0px;top:1047px;width:1919px;height:49px;background:linear-gradient(90deg,#EBE4E2 0%,#E9E4E3 55%,#E5E5E9 100%);"></div>
<div style="position:absolute;left:0px;top:1095px;width:1919px;height:1px;background:#F2F0F0;"></div>
<div style="position:absolute;left:297px;top:1047px;width:197.5px;height:42px;background:#fff;border-radius:0 0 7px 7px;"></div>
<svg style="position:absolute;left:289px;top:1047px;" width="8" height="8" viewBox="0 0 8 8" fill="none"><path d="M0 0H8V8A8 8 0 0 0 0 0Z" fill="#fff"/></svg>
<svg style="position:absolute;left:494.5px;top:1047px;" width="8" height="8" viewBox="0 0 8 8" fill="none"><path d="M8 0H0V8A8 8 0 0 1 8 0Z" fill="#fff"/></svg>
<svg style="position:absolute;left:30px;top:1058px;" width="70" height="24" viewBox="0 0 70 24" fill="none">
<path d="M13.1 4.6L5.6 11.5L13.1 18.4" stroke="#8E8E8E" stroke-width="1.6"/>
<path d="M54.8 4.6L62.2 11.5L54.8 18.4" stroke="#8E8E8E" stroke-width="1.6"/>
</svg>
<div class="t" style="left:180.50px;top:1064.74px;font-size:19.5px;line-height:19.5px;color:#242424;font-weight:400;letter-spacing:0.340px;">GetParam</div>
<div style="position:absolute;left:290px;top:1058px;width:1px;height:26px;background:#C8C4C4;"></div>
<div class="t" style="left:309.50px;top:1058.99px;font-size:19.5px;line-height:19.5px;color:#1F1F1F;font-weight:400;letter-spacing:0.780px;-webkit-text-stroke:0.45px #1F1F1F;">Secteurs_territoire</div>
<div style="position:absolute;left:309.5px;top:1082px;width:172.5px;height:3px;background:#107C41;border-radius:1.5px;"></div>
<div style="position:absolute;left:500px;top:1058px;width:1px;height:26px;background:#C8C4C4;"></div>
<svg style="position:absolute;left:560px;top:1057px;" width="26" height="26" viewBox="0 0 26 26" fill="none"><path d="M13 4.5V21.5M4.5 13H21.5" stroke="#2B2B2B" stroke-width="1.5"/></svg>
<div style="position:absolute;left:1155.5px;top:1063.9px;width:3px;height:3px;background:#242424;"></div>
<div style="position:absolute;left:1155.5px;top:1070.0px;width:3px;height:3px;background:#242424;"></div>
<div style="position:absolute;left:1155.5px;top:1076.1px;width:3px;height:3px;background:#242424;"></div>
<div style="position:absolute;left:1181px;top:1057px;width:711.5px;height:26px;background:#F3F3F3;border-radius:13px;"></div>
<svg style="position:absolute;left:1181px;top:1057px;" width="712" height="26" viewBox="0 0 712 26" fill="none">
<path d="M17.5 6.5L8 13L17.5 19.5Z" fill="#6E6E6E" stroke="#6E6E6E" stroke-width="1.3" stroke-linejoin="round"/>
<path d="M694 6.5L703.5 13L694 19.5Z" fill="#6E6E6E" stroke="#6E6E6E" stroke-width="1.3" stroke-linejoin="round"/>
</svg>
<div style="position:absolute;left:1206.5px;top:1063.5px;width:126px;height:13px;background:#6E6E6E;border-radius:6.5px;"></div>
</body></html>
